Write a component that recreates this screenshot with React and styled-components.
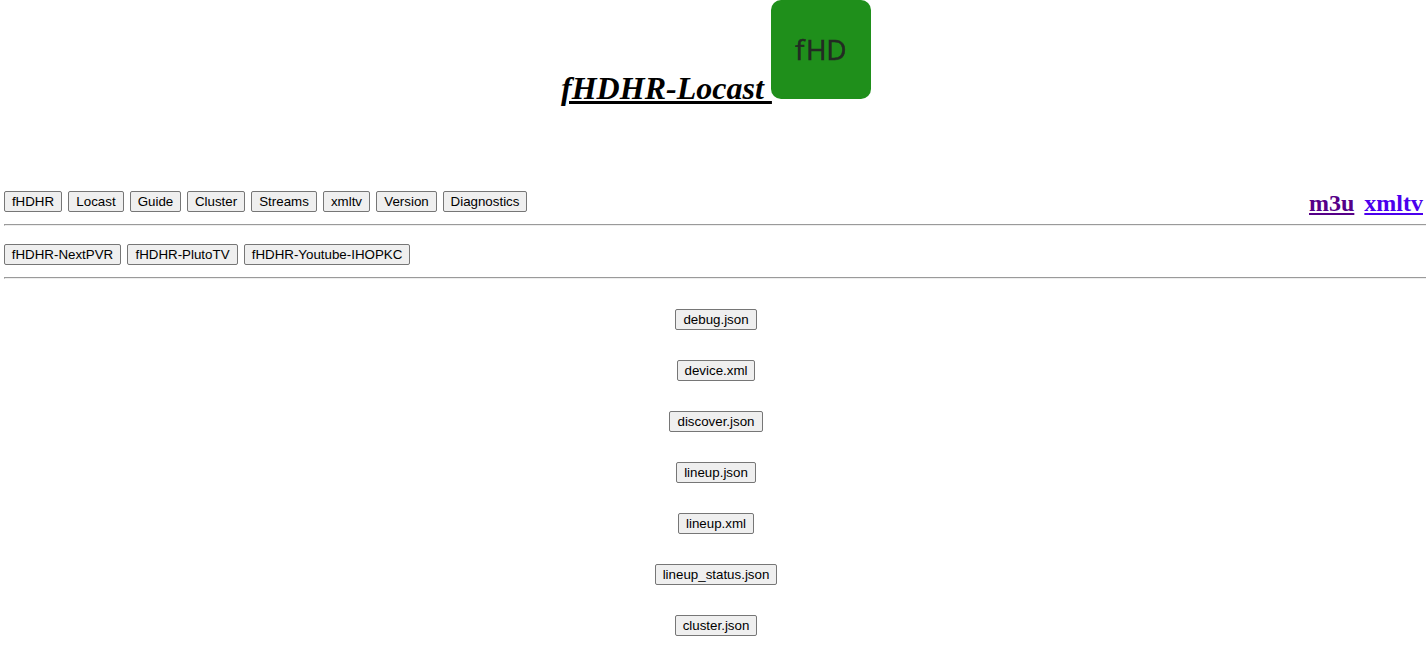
import React from "react";
import styled, { createGlobalStyle } from "styled-components";

const GlobalStyle = createGlobalStyle`
  body {
    margin: 0;
    background: #fff;
    color: #000;
    font-family: "Liberation Serif", "Times New Roman", serif;
    overflow: hidden;
  }
`;

const Page = styled.div`
  box-sizing: border-box;
  height: 663px;
  padding-left: 4px;
`;

const Header = styled.header`
  display: flex;
  justify-content: center;
  align-items: flex-start;
  height: 191px;
`;

const Title = styled.h1`
  margin: 70px 0 0;
  padding-left: 2px;
  width: 210px;
  font-size: 32px;
  line-height: 37px;
  letter-spacing: 0.02px;
  font-style: italic;
  font-weight: bold;
  text-decoration: underline;
  text-decoration-thickness: 3px;
  text-underline-offset: 2px;
  white-space: pre;
`;

const Logo = styled.svg`
  display: block;
  width: 100px;
  height: 99px;
`;

const LogoText = styled.text`
  font: 28px "Open Sans", sans-serif;
  fill: #232b23;
  stroke: #232b23;
  stroke-width: 0.5px;
  filter: blur(0.6px);
`;

const Bar = styled.nav`
  display: flex;
  justify-content: space-between;
  height: 33px;
`;

const ButtonGroup = styled.div`
  display: flex;
  align-items: flex-start;
  gap: 6px;
`;

const Button = styled.button`
  box-sizing: border-box;
  width: ${(p) => p.$width}px;
  height: 21px;
  margin: 0;
  padding: 0;
  border: 1px solid #767676;
  border-radius: 2px;
  background: #efefef;
  color: #000;
  font: 13.333px/19px "Liberation Sans", Arial, sans-serif;
  text-align: center;
  white-space: nowrap;
`;

const Rule = styled.hr`
  height: 0;
  margin: 0 0 18px;
  border: 1px solid;
  border-color: #9a9a9a #eee #eee #9a9a9a;
  border-right: 0;
`;

const Links = styled.div`
  display: flex;
  gap: 10px;
  padding-right: 3px;
  font-size: 24px;
  line-height: 27px;
  font-weight: bold;
`;

const FeedLink = styled.a`
  color: ${(p) => p.$color};
  text-decoration: underline;
  height: 27px;
  margin-top: -1px;
`;

const FileList = styled.main`
  display: flex;
  flex-direction: column;
  align-items: center;
  gap: 30px;
  padding: 12px 0 0 2px;
`;

const pages = [
  ["fHDHR", 58],
  ["Locast", 56],
  ["Guide", 51],
  ["Cluster", 58],
  ["Streams", 66],
  ["xmltv", 47],
  ["Version", 61],
  ["Diagnostics", 84],
];

const instances = [
  ["fHDHR-NextPVR", 117],
  ["fHDHR-PlutoTV", 111],
  ["fHDHR-Youtube-IHOPKC", 166],
];

const files = [
  ["debug.json", 82],
  ["device.xml", 78],
  ["discover.json", 94],
  ["lineup.json", 80],
  ["lineup.xml", 76],
  ["lineup_status.json", 122],
  ["cluster.json", 82],
];

const renderButtons = (items) =>
  items.map(([label, width]) => (
    <Button key={label} $width={width}>
      {label}
    </Button>
  ));

export default function App() {
  return (
    <>
      <GlobalStyle />
      <Page>
        <Header>
          <Title>{"fHDHR-Locast "}</Title>
          <Logo viewBox="0 0 100 99">
            <rect width="100" height="99" rx="10" fill="#1f8f1b" />
            <LogoText x="24 35 55.3" y="60.3">
              fHD
            </LogoText>
          </Logo>
        </Header>
        <Bar>
          <ButtonGroup>{renderButtons(pages)}</ButtonGroup>
          <Links>
            <FeedLink href="#m3u" $color="#550088">m3u</FeedLink>
            <FeedLink href="#xmltv" $color="#4b00ee">xmltv</FeedLink>
          </Links>
        </Bar>
        <Rule />
        <Bar>
          <ButtonGroup>{renderButtons(instances)}</ButtonGroup>
        </Bar>
        <Rule />
        <FileList>{renderButtons(files)}</FileList>
      </Page>
    </>
  );
}
